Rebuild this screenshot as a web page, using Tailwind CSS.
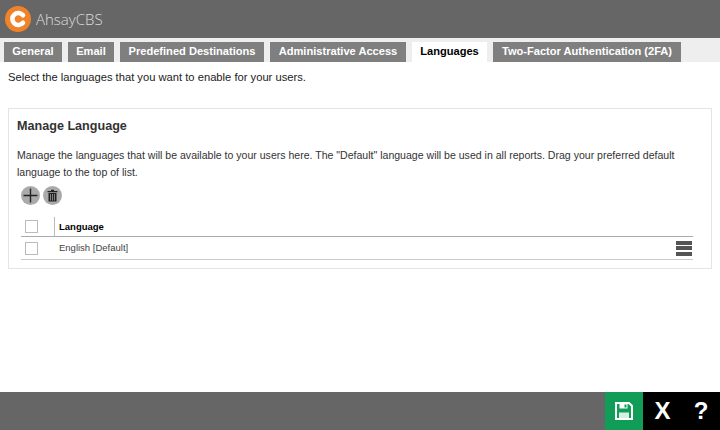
<!DOCTYPE html>
<html>
<head>
  <title>AhsayCBS</title>
  <meta charset="utf-8">
  <script src="https://cdn.jsdelivr.net/npm/@tailwindcss/browser@4"></script>
</head>
<body class="bg-white w-[720px] h-[430px] overflow-hidden flex flex-col font-['Liberation_Sans',sans-serif]">
  <!-- Header -->
  <div class="h-[38px] bg-[#666666] flex items-center pl-[5px] gap-[5px]">
    <svg width="26" height="26" viewBox="0 0 26 26">
      <circle cx="13" cy="13" r="13" fill="#f0832a"/>
      <path d="M18 9.2 A6 6 0 1 0 18 16.8" fill="none" stroke="#fff" stroke-width="4.6" stroke-linecap="round"/>
    </svg>
    <span class="text-[15px] font-['Open_Sans',sans-serif] font-light text-[#dddddd]">AhsayCBS</span>
  </div>

  <!-- Tabs -->
  <div class="h-6 bg-[#eeeeee] flex items-end gap-[6px] pl-1 text-[11.1px] font-bold text-white">
    <div class="h-5 w-[58px] bg-[#7f7f7f] flex items-center justify-center pb-[2px]">General</div>
    <div class="h-5 w-[46px] bg-[#7f7f7f] flex items-center justify-center pb-[2px]">Email</div>
    <div class="h-5 w-[144px] bg-[#7f7f7f] flex items-center justify-center pb-[2px]">Predefined Destinations</div>
    <div class="h-5 w-[136px] bg-[#7f7f7f] flex items-center justify-center pb-[2px]">Administrative Access</div>
    <div class="h-5 w-[75px] bg-white text-black flex items-center justify-center pb-[2px]">Languages</div>
    <div class="h-5 w-[188px] bg-[#7f7f7f] flex items-center justify-center pb-[2px]">Two-Factor Authentication (2FA)</div>
  </div>

  <!-- Content -->
  <div class="flex-1 px-2">
    <p class="text-[11.2px] leading-[14px] text-[#222222] mt-[8px]">Select the languages that you want to enable for your users.</p>
    <div class="mt-[24px] h-[161px] border border-[#e4e4e4] px-2 text-[#333333]">
      <h2 class="text-[12.6px] font-bold leading-[16px] mt-[9px]">Manage Language</h2>
      <p class="text-[10.56px] leading-[17px] mt-[13px] text-[#333333]">Manage the languages that will be available to your users here. The "Default" language will be used in all reports. Drag your preferred default<br>language to the top of list.</p>
      <div class="flex gap-[3px] ml-[4px] mt-[5px]">
        <svg width="19" height="19" viewBox="0 0 19 19">
          <circle cx="9.5" cy="9.5" r="9.5" fill="#aaaaaa"/>
          <path d="M9.5 2.5v14M2.5 9.5h14" stroke="#222" stroke-width="1.4"/>
        </svg>
        <svg width="19" height="19" viewBox="0 0 19 19">
          <circle cx="9.5" cy="9.5" r="9.5" fill="#aaaaaa"/>
          <path d="M4.5 5h10v1.2h-10zM8 3.8h3V5H8zM5.5 7h8v8.5h-8z" fill="#222"/>
          <path d="M7.5 8v6.5M9.5 8v6.5M11.5 8v6.5" stroke="#aaa" stroke-width=".7"/>
        </svg>
      </div>
      <!-- Table -->
      <div class="mr-[10px] ml-[4px] mt-[12px] text-[9.5px]">
        <div class="h-[20px] border-b border-[#aaaaaa] flex items-center">
          <div class="w-[34px] h-full flex items-center pl-1 border-r border-[#bbbbbb]">
            <span class="w-[13px] h-[13px] border border-[#bbbbbb]"></span>
          </div>
          <span class="pl-1 pt-[2px] font-bold text-black">Language</span>
        </div>
        <div class="h-[23px] border-b border-[#cccccc] flex items-center">
          <div class="w-[34px] pl-1 flex">
            <span class="w-[13px] h-[13px] border border-[#bbbbbb]"></span>
          </div>
          <span class="pl-1 text-[#444444]">English [Default]</span>
          <div class="ml-auto mr-[1px] flex flex-col gap-[1.5px]">
            <span class="block w-4 h-[4px] bg-[#555555]"></span>
            <span class="block w-4 h-[4px] bg-[#555555]"></span>
            <span class="block w-4 h-[4px] bg-[#555555]"></span>
          </div>
        </div>
      </div>
    </div>
  </div>

  <!-- Footer -->
  <div class="h-[38px] bg-[#666666] flex justify-end">
    <div class="w-[38px] bg-[#0f9d58] flex items-center justify-center">
      <svg width="18" height="18" viewBox="0 0 18 18">
        <path d="M1 1h13l3 3v13H1z" fill="none" stroke="#fff" stroke-width="2"/>
        <path d="M4.5 1.5h8v5h-8z" fill="#fff"/>
        <path d="M9.5 2.5h2v3h-2z" fill="#0f9d58"/>
        <path d="M4 10.5h10V16H4z" fill="#d8f0e2"/>
      </svg>
    </div>
    <div class="w-[77px] bg-black flex items-center text-white font-bold text-[24px]">
      <span class="w-[39px] text-center">X</span>
      <span class="w-[38px] text-center">?</span>
    </div>
  </div>
</body>
</html>
